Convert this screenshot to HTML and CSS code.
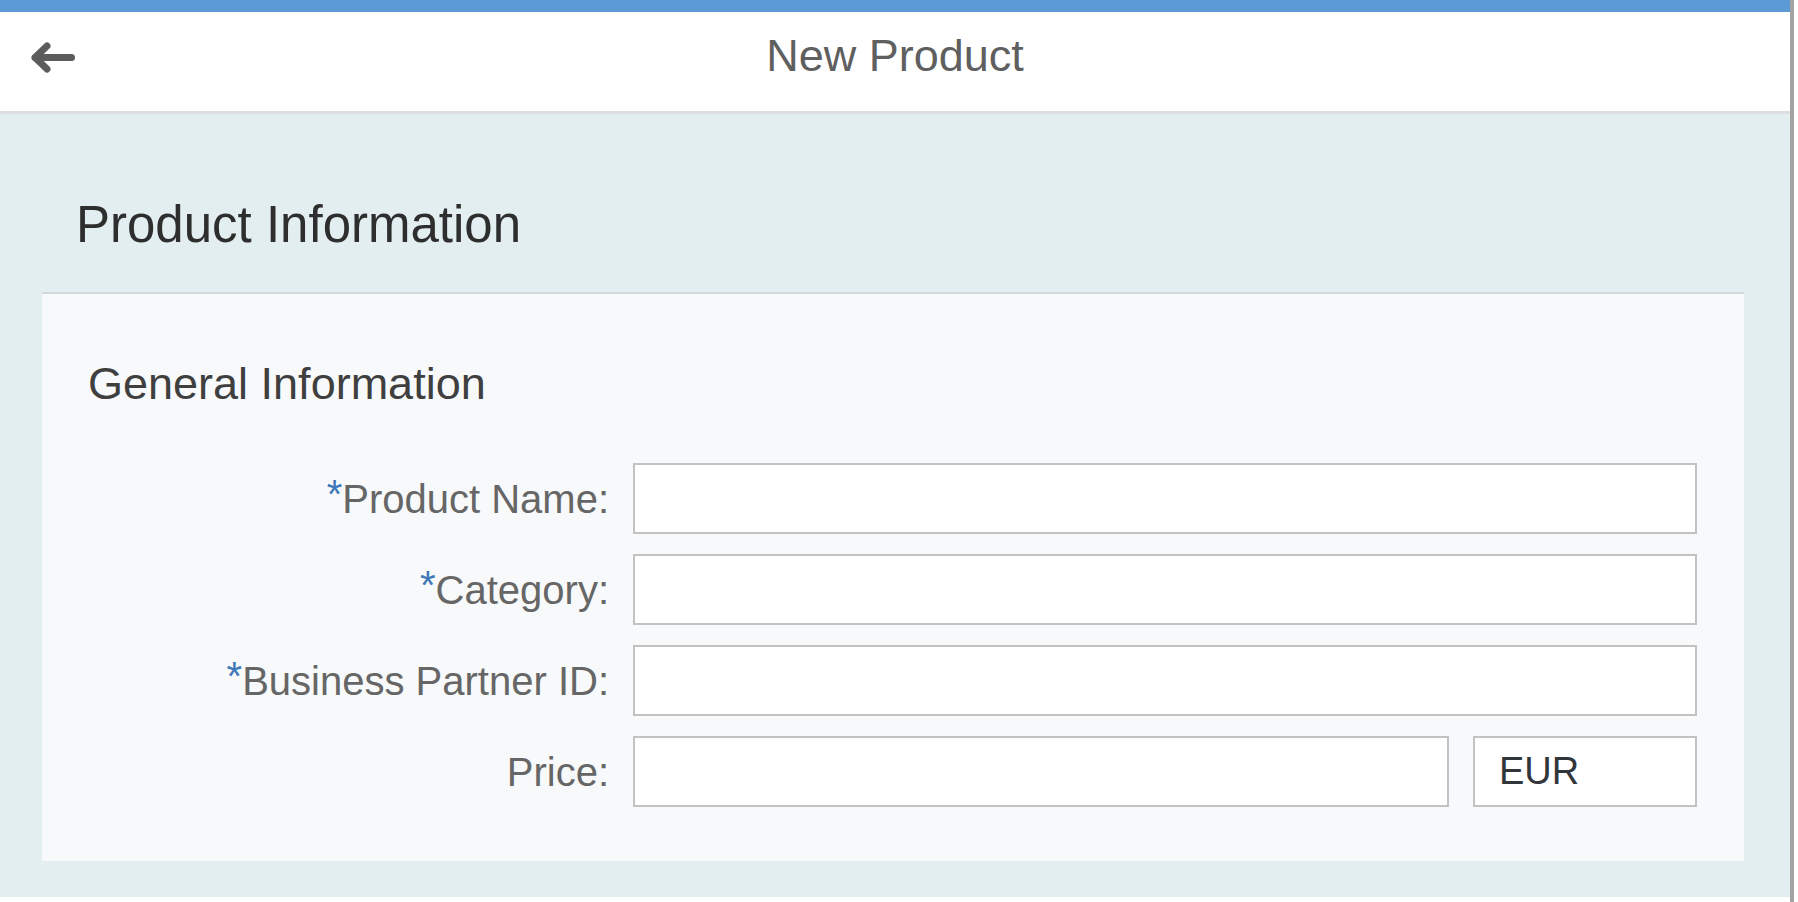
FILE: index.html
```html
<!DOCTYPE html>
<html lang="en">
<head>
<meta charset="utf-8">
<title>New Product</title>
<link rel="stylesheet" href="styles.css">
</head>
<body>
<div class="frame">
  <div class="app">
    <header class="bar">
      <button class="back" type="button" aria-label="Back">
        <svg width="50" height="32" viewBox="0 0 50 32">
          <path d="M7 16.5 H43.5 M19 5 L7 16.5 L19 28" fill="none" stroke="#5c5c5c" stroke-width="7" stroke-linecap="round" stroke-linejoin="round"/>
        </svg>
      </button>
      <h1 class="bar-title">New Product</h1>
      <div class="bar-spacer"></div>
    </header>
    <main class="content">
      <h2 class="section-title">Product Information</h2>
      <section class="panel">
        <h3 class="panel-title">General Information</h3>
        <form class="form">
          <label class="label"><span class="req">*</span>Product Name:</label>
          <input class="field" type="text">
          <label class="label"><span class="req">*</span>Category:</label>
          <input class="field" type="text">
          <label class="label"><span class="req">*</span>Business Partner ID:</label>
          <input class="field" type="text">
          <label class="label">Price:</label>
          <div class="price-row">
            <input class="field" type="text">
            <input class="field currency" type="text" value="EUR">
          </div>
        </form>
      </section>
    </main>
  </div>
</div>
</body>
</html>
```

FILE: styles.css
```css
* { box-sizing: border-box; }

html, body {
  margin: 0;
  padding: 0;
  background: #ffffff;
  font-family: "Liberation Sans", Arial, sans-serif;
}

.frame {
  width: 1794px;
  height: 902px;
  border-right: 4px solid #a3a3a3;
}

.app {
  width: 1790px;
  height: 897px;
  background: #e3eef0;
  display: flex;
  flex-direction: column;
}

.bar {
  height: 114px;
  background: #ffffff;
  border-top: 12px solid #5b9ad4;
  border-bottom: 3px solid #dcdedf;
  padding-bottom: 11px;
  display: grid;
  grid-template-columns: 1fr auto 1fr;
  align-items: center;
}

.back {
  justify-self: start;
  margin-left: 28px;
  margin-top: 2px;
  padding: 0;
  border: 0;
  background: transparent;
  width: 50px;
  height: 32px;
  display: flex;
}

.bar-title {
  margin: 0;
  font-weight: normal;
  font-size: 45px;
  line-height: 52px;
  color: #5f5f5f;
  white-space: nowrap;
}

.content {
  padding: 82px 46px 0 42px;
}

.section-title {
  margin: 0 0 38px 0;
  padding-left: 34px;
  font-weight: normal;
  font-size: 51px;
  line-height: 58px;
  color: #2e2e2e;
}

.panel {
  background: #f7f9fa;
  border-top: 2px solid #d3d8da;
  padding: 64px 47px 54px 44px;
}

.panel-title {
  margin: 0 0 53px 0;
  padding-left: 2px;
  font-weight: normal;
  font-size: 45px;
  line-height: 52px;
  color: #3f3f3f;
}

.form {
  display: grid;
  grid-template-columns: 523px 1064px;
  column-gap: 24px;
  row-gap: 20px;
  align-items: center;
}

.label {
  text-align: right;
  font-size: 40px;
  line-height: 46px;
  color: #666666;
  white-space: nowrap;
}

.req {
  color: #3f78b8;
  vertical-align: 5px;
  line-height: 0;
}

.field {
  display: block;
  width: 100%;
  height: 71px;
  margin: 0;
  border: 2px solid #c2c2c2;
  border-radius: 0;
  background: #ffffff;
  font-family: "Liberation Sans", Arial, sans-serif;
  font-size: 38px;
  color: #32363a;
  padding: 0 22px;
  outline: none;
}

.price-row {
  display: grid;
  grid-template-columns: 816px 224px;
  column-gap: 24px;
}

.currency {
  padding-left: 24px;
}
```
